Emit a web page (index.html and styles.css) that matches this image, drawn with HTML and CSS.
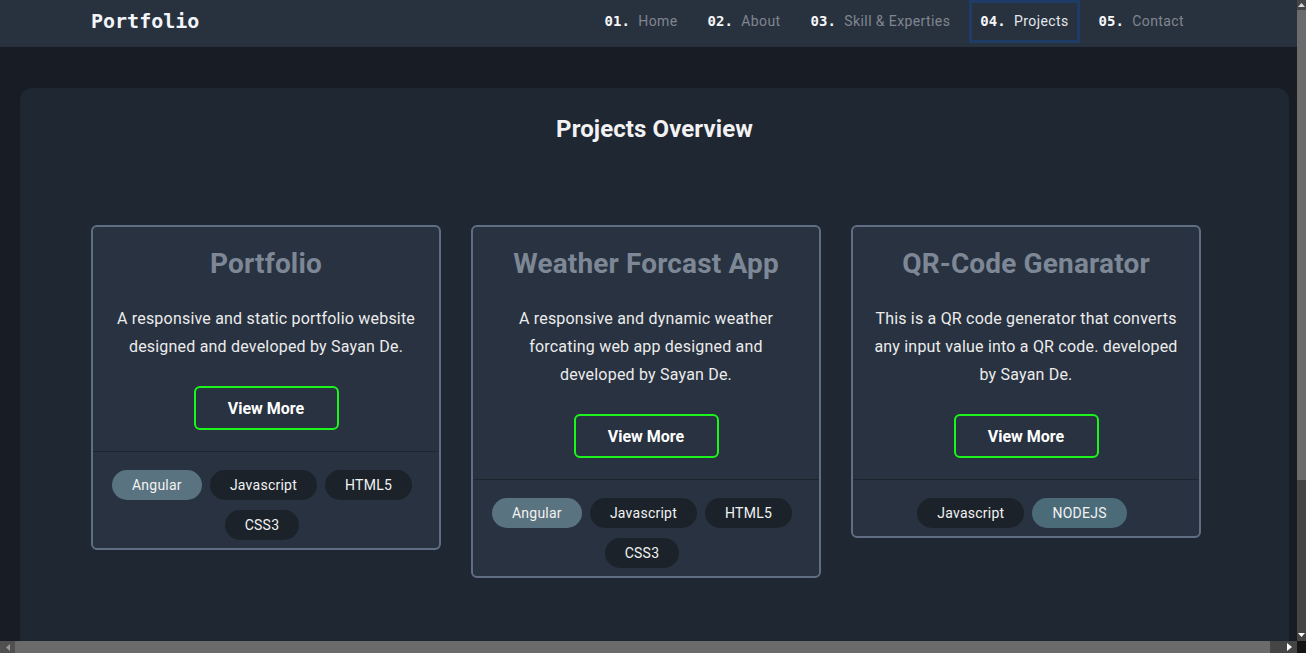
FILE: index.html
```html
<!DOCTYPE html>
<html lang="en">
<head>
<meta charset="utf-8">
<title>Portfolio</title>
<link rel="stylesheet" href="styles.css">
</head>
<body>
<header class="navbar">
  <div class="logo">Portfolio</div>
  <nav class="menu">
    <a class="menu-item"><span class="num">01. </span>Home</a>
    <a class="menu-item"><span class="num">02. </span>About</a>
    <a class="menu-item"><span class="num">03. </span>Skill &amp; Experties</a>
    <a class="menu-item active"><span class="num">04. </span>Projects</a>
    <a class="menu-item"><span class="num">05. </span>Contact</a>
  </nav>
</header>
<main class="section">
  <h2 class="section-title">Projects Overview</h2>
  <div class="cards">
    <article class="card">
      <div class="card-body">
        <h3 class="card-title">Portfolio</h3>
        <p class="card-text">A responsive and static portfolio website designed and developed by Sayan De.</p>
        <a class="btn">View More</a>
      </div>
      <div class="card-tags">
        <span class="tag tag-primary">Angular</span>
        <span class="tag">Javascript</span>
        <span class="tag">HTML5</span>
        <span class="tag">CSS3</span>
      </div>
    </article>
    <article class="card">
      <div class="card-body">
        <h3 class="card-title">Weather Forcast App</h3>
        <p class="card-text">A responsive and dynamic weather forcating web app designed and developed by Sayan De.</p>
        <a class="btn">View More</a>
      </div>
      <div class="card-tags">
        <span class="tag tag-primary">Angular</span>
        <span class="tag">Javascript</span>
        <span class="tag">HTML5</span>
        <span class="tag">CSS3</span>
      </div>
    </article>
    <article class="card">
      <div class="card-body">
        <h3 class="card-title">QR-Code Genarator</h3>
        <p class="card-text">This is a QR code generator that converts any input value into a QR code. developed by Sayan De.</p>
        <a class="btn">View More</a>
      </div>
      <div class="card-tags">
        <span class="tag">Javascript</span>
        <span class="tag tag-node">NODEJS</span>
      </div>
    </article>
  </div>
</main>

<div class="vscroll" aria-hidden="true">
  <span class="sb-btn sb-vbtn">
    <svg width="7" height="4" viewBox="0 0 7 4"><polygon points="0,4 7,4 3.5,0" fill="#d8d8d8"/></svg>
  </span>
  <span class="sb-vthumb"></span>
  <span class="sb-fill"></span>
  <span class="sb-btn sb-vbtn sb-vbtn-end">
    <svg width="7" height="4" viewBox="0 0 7 4"><polygon points="0,0 7,0 3.5,4" fill="#ffffff"/></svg>
  </span>
</div>
<div class="hscroll" aria-hidden="true">
  <span class="sb-btn sb-hbtn">
    <svg width="4" height="7" viewBox="0 0 4 7"><polygon points="4,0 4,7 0,3.5" fill="#9a9a9a"/></svg>
  </span>
  <span class="sb-hthumb"></span>
  <span class="sb-fill"></span>
  <span class="sb-btn sb-hbtn sb-hbtn-end">
    <svg width="5" height="8" viewBox="0 0 5 8"><polygon points="0,0 0,8 5,4" fill="#ffffff"/></svg>
  </span>
</div>
<div class="sb-corner" aria-hidden="true"></div>
</body>
</html>
```
FILE: styles.css
```css
html {
  background: #181c24;
}

body {
  margin: 0;
  min-width: 1309px;
  background: #181c24;
  font-family: Roboto, "Liberation Sans", sans-serif;
  color: #e8e8e8;
}

/* ---------- navbar ---------- */
.navbar {
  height: 47px;
  background: #28323f;
  display: flex;
  align-items: flex-start;
  justify-content: space-between;
  padding: 0 114px 0 91px;
  box-sizing: border-box;
}

.logo {
  margin-top: 9px;
  font-family: "DejaVu Sans Mono", "Liberation Mono", monospace;
  font-weight: bold;
  font-size: 20px;
  color: #f2f5fa;
}

.menu {
  display: flex;
  gap: 8px;
}

.menu-item {
  display: block;
  padding: 10px 8px;
  border: 3px solid transparent;
  line-height: 17px;
  font-size: 14px;
  letter-spacing: 0.4px;
  color: #80868f;
  white-space: pre;
}

.menu-item.active {
  border-color: #1f3c66;
  color: #e4e6ea;
}

.num {
  font-family: "DejaVu Sans Mono", "Liberation Mono", monospace;
  font-weight: bold;
  font-size: 14px;
  letter-spacing: 0;
  color: #f4f6f8;
}

/* ---------- section ---------- */
.section {
  margin: 41px 20px 20px;
  padding: 25px 0 120px 71px;
  min-height: 600px;
  background: #1f2733;
  border-radius: 12px;
}

.section-title {
  margin: 0 0 80px;
  padding-right: 71px;
  text-align: center;
  font-size: 24px;
  line-height: 32px;
  font-weight: bold;
  letter-spacing: 0.1px;
  color: #f2f2f2;
}

.cards {
  display: flex;
  align-items: flex-start;
  gap: 30px;
}

.card {
  width: 350px;
  box-sizing: border-box;
  border: 2px solid #5f6e82;
  border-radius: 6px;
  background: #283240;
}

.card-body {
  padding: 20px 20px 21px;
  display: flex;
  flex-direction: column;
  align-items: center;
  text-align: center;
}

.card-title {
  margin: 0 0 24px;
  font-size: 28px;
  line-height: 34px;
  font-weight: bold;
  letter-spacing: 0.15px;
  color: #7d8796;
}

.card-text {
  margin: 0;
  font-size: 16px;
  line-height: 28px;
  letter-spacing: 0.2px;
  color: #ececec;
}

.btn {
  margin-top: 25px;
  width: 145px;
  height: 44px;
  box-sizing: border-box;
  border: 2px solid #1cf51c;
  border-radius: 6px;
  display: flex;
  align-items: center;
  justify-content: center;
  font-size: 16px;
  font-weight: bold;
  color: #ffffff;
}

.card-tags {
  border-top: 1px solid #1d252f;
  padding: 18px 16px 8px;
  display: flex;
  flex-wrap: wrap;
  justify-content: center;
  row-gap: 10px;
}

.tag {
  margin-right: 8px;
  padding: 0 20px;
  height: 30px;
  line-height: 30px;
  border-radius: 15px;
  background: #1b222a;
  font-size: 14px;
  letter-spacing: 0.25px;
  color: #f2f2f2;
}

.tag-primary {
  background: #5a7380;
}

.tag-node {
  background: #4b6b78;
}

/* ---------- browser scrollbars (overlay) ---------- */
.vscroll {
  position: fixed;
  top: 0;
  right: 0;
  width: 9px;
  height: 641px;
  display: flex;
  flex-direction: column;
  background: #454545;
}

.hscroll {
  position: fixed;
  left: 0;
  bottom: 0;
  width: 1297px;
  height: 12px;
  display: flex;
  background: #454545;
}

.sb-btn {
  display: flex;
  align-items: center;
  justify-content: center;
  flex: none;
  background: #454545;
}

.sb-vbtn {
  height: 10px;
}

.sb-vbtn-end {
  height: 12px;
}

.sb-hbtn {
  width: 15px;
  background: #505050;
}

.sb-hbtn-end {
  background: #454545;
}

.sb-vthumb {
  flex: none;
  height: 470px;
  background: #6b6b6b;
}

.sb-hthumb {
  flex: none;
  width: 1255px;
  background: #6b6b6b;
}

.sb-fill {
  flex: 1;
}

.sb-corner {
  position: fixed;
  right: 0;
  bottom: 0;
  width: 9px;
  height: 12px;
  background: #141414;
}
```
